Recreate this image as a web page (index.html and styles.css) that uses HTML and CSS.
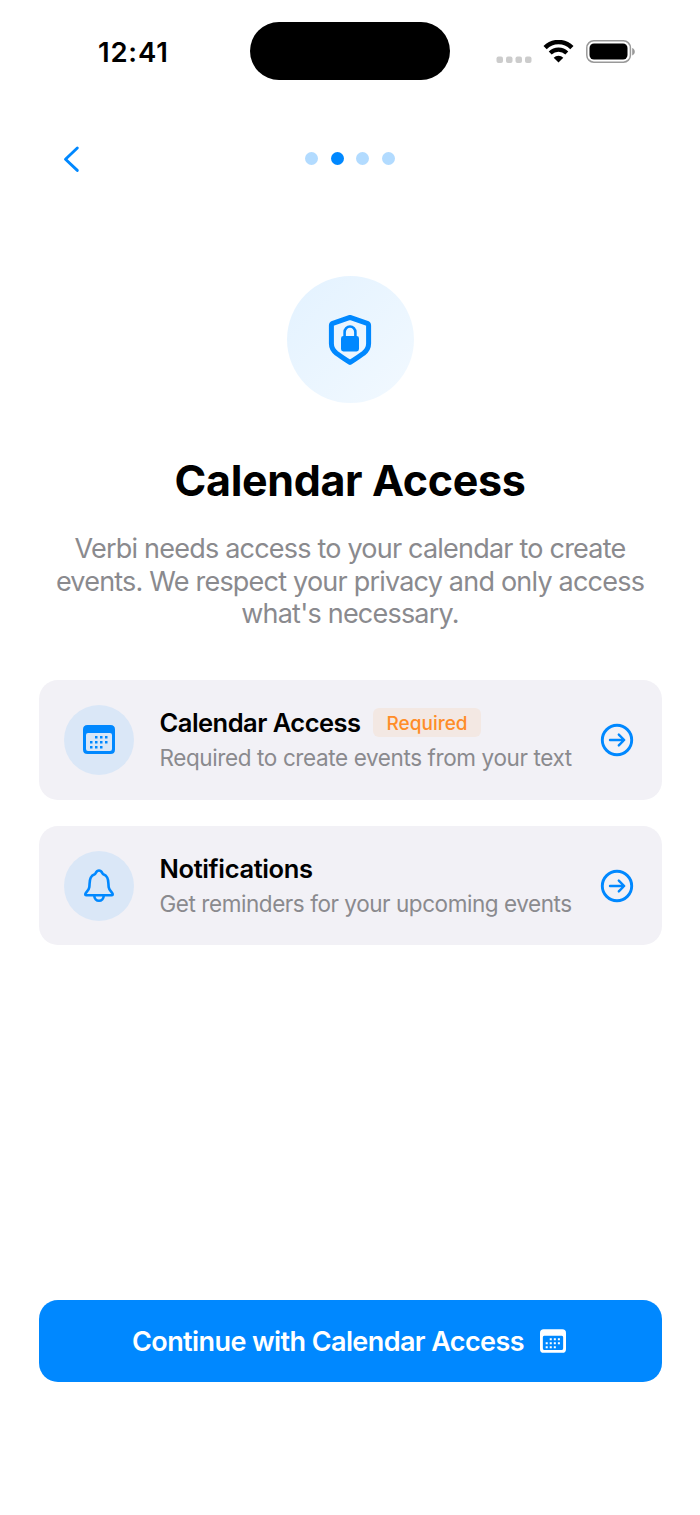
FILE: index.html
```html
<!DOCTYPE html>
<html lang="en">
<head>
    <meta charset="UTF-8">
    <meta name="viewport" content="width=device-width, initial-scale=1.0">
    <title>Calendar Access</title>
    <link rel="stylesheet" href="styles.css">
</head>
<body>
    <div class="status-bar">
        <div class="time">12:41</div>
        <div class="island"></div>
        <div class="status-icons">
            <svg class="cellular" width="36" height="7" viewBox="0 0 36 7" fill="#cccccc">
                <rect x="0.5" y="0.5" width="6.5" height="6.5" rx="2"/>
                <rect x="10" y="0.5" width="6.5" height="6.5" rx="2"/>
                <rect x="19.5" y="0.5" width="6.5" height="6.5" rx="2"/>
                <rect x="29" y="0.5" width="6.5" height="6.5" rx="2"/>
            </svg>
            <svg class="wifi" width="31" height="23" viewBox="0 0 31 23">
                <path d="M2.1 7.6a19 19 0 0 1 26.8 0" fill="none" stroke="#000" stroke-width="4.6"/>
                <path d="M7.2 12.9a12 12 0 0 1 16.6 0" fill="none" stroke="#000" stroke-width="4.2"/>
                <path d="M15.5 22.4 10.7 17.8a6.9 6.9 0 0 1 9.6 0z"/>
            </svg>
            <svg class="battery" width="50" height="23" viewBox="0 0 50 23">
                <rect x="0.8" y="0.8" width="43.6" height="21.4" rx="7" fill="none" stroke="#999" stroke-width="1.5"/>
                <rect x="3.5" y="3.5" width="38" height="16" rx="4.5"/>
                <path d="M46.2 8v7.4c1.6-.6 2.6-2 2.6-3.7s-1-3.1-2.6-3.7z" fill="#999"/>
            </svg>
        </div>
    </div>

    <div class="nav">
        <a class="back">
            <svg width="18" height="28" viewBox="0 0 18 28">
                <path d="M15.3 3 3.5 14.2 15.3 25.4" fill="none" stroke="#0088ff" stroke-width="2.9" stroke-linecap="round" stroke-linejoin="round"/>
            </svg>
        </a>
        <div class="dots">
            <span class="dot"></span>
            <span class="dot active"></span>
            <span class="dot"></span>
            <span class="dot"></span>
        </div>
    </div>

    <div class="intro">
        <div class="hero">
            <svg width="44" height="52" viewBox="0 0 44 52">
                <path d="M22 3.4 39.2 9.4Q40.6 10 40.6 11.6V29.5Q40.6 35.2 35.6 39.2Q31 42.6 22 48.4Q13 42.6 8.4 39.2Q3.4 35.2 3.4 29.5V11.6Q3.4 10 4.8 9.4Z" fill="none" stroke="#0088ff" stroke-width="5" stroke-linejoin="round"/>
                <rect x="13" y="22" width="18" height="15.4" rx="2.4" fill="#0088ff"/>
                <path d="M16.6 23.5V18.2a5.4 5.7 0 0 1 10.8 0v5.3" fill="none" stroke="#0088ff" stroke-width="2.6"/>
            </svg>
        </div>
        <h1>Calendar Access</h1>
        <p class="lead">Verbi needs access to your calendar to create<br>events. We respect your privacy and only access<br>what's necessary.</p>
    </div>

    <div class="cards">
        <div class="card">
            <div class="card-icon">
                <svg width="32" height="29" viewBox="0 0 32 29" fill="#0088ff">
                    <path fill-rule="evenodd" d="M4.5 0h23Q32 0 32 4.5v20Q32 29 27.5 29h-23Q0 29 0 24.5v-20Q0 0 4.5 0zM5 8Q3 8 3 10v14Q3 26 5 26h22Q29 26 29 24V10Q29 8 27 8z"/>
                    <path d="M12 11h2.5v2.5H12zM17 11h2.5v2.5H17zM22 11h2.5v2.5H22zM7 16h2.5v2.5H7zM12 16h2.5v2.5H12zM17 16h2.5v2.5H17zM22 16h2.5v2.5H22zM7 21h2.5v2.5H7zM12 21h2.5v2.5H12zM17 21h2.5v2.5H17z"/>
                </svg>
            </div>
            <div class="card-text">
                <div class="card-title">Calendar Access <span class="badge">Required</span></div>
                <div class="card-sub">Required to create events from your text</div>
            </div>
            <svg class="arrow" width="34" height="34" viewBox="0 0 34 34" fill="none" stroke="#0088ff" stroke-width="2.9">
                <circle cx="17" cy="17" r="14.7"/>
                <path d="M10 17h14M18.8 11.6l5.4 5.4-5.4 5.4" stroke-width="2.4" stroke-linecap="round" stroke-linejoin="round"/>
            </svg>
        </div>
        <div class="card">
            <div class="card-icon bell">
                <svg width="32" height="34" viewBox="0 0 32 34" fill="none" stroke="#0088ff" stroke-width="2.6" stroke-linejoin="round">
                    <path d="M3.4 27.2H28.6Q30.2 27.2 29.5 25.5C28.6 23.7 26.2 22.2 25.7 19.2C25.2 16 25.8 12.5 24.2 9.5Q23 7.2 20.3 6.3C19.3 6 19 2.5 16 2.5S12.7 6 11.7 6.3Q9 7.2 7.8 9.5C6.2 12.5 6.8 16 6.3 19.2C5.8 22.2 3.4 23.7 2.5 25.5Q1.8 27.2 3.4 27.2Z"/>
                    <path d="M11.3 27.7a4.7 5 0 0 0 9.4 0"/>
                </svg>
            </div>
            <div class="card-text">
                <div class="card-title wide">Notifications</div>
                <div class="card-sub tight">Get reminders for your upcoming events</div>
            </div>
            <svg class="arrow" width="34" height="34" viewBox="0 0 34 34" fill="none" stroke="#0088ff" stroke-width="2.9">
                <circle cx="17" cy="17" r="14.7"/>
                <path d="M10 17h14M18.8 11.6l5.4 5.4-5.4 5.4" stroke-width="2.4" stroke-linecap="round" stroke-linejoin="round"/>
            </svg>
        </div>
    </div>

    <a class="continue">
        <span class="continue-label">Continue with Calendar Access</span>
        <svg width="26" height="24" viewBox="0 0 32 29" fill="#fff">
            <path fill-rule="evenodd" d="M4.5 0h23Q32 0 32 4.5v20Q32 29 27.5 29h-23Q0 29 0 24.5v-20Q0 0 4.5 0zM5 8Q3.5 8 3.5 10v13.5Q3.5 25.5 5 25.5h22Q28.5 25.5 28.5 23.5V10Q28.5 8 27 8z"/>
            <path d="M12 11h2.5v2.5H12zM17 11h2.5v2.5H17zM22 11h2.5v2.5H22zM7 16h2.5v2.5H7zM12 16h2.5v2.5H12zM17 16h2.5v2.5H17zM22 16h2.5v2.5H22zM7 21h2.5v2.5H7zM12 21h2.5v2.5H12zM17 21h2.5v2.5H17z"/>
        </svg>
    </a>
</body>
</html>
```
FILE: styles.css
```css
* {
    box-sizing: border-box;
}
body {
    margin: 0;
    height: 1515px;
    background: #fff;
    color: #000;
    font-family: Inter, "Liberation Sans", sans-serif;
    display: flex;
    flex-direction: column;
    white-space: nowrap;
}
svg {
    display: block;
    flex: none;
}
.status-bar {
    height: 102px;
    display: grid;
    grid-template-columns: 250px 200px 250px;
    align-items: center;
}
.time {
    padding: 2px 0 0 98px;
    font-size: 27.5px;
    font-weight: 600;
    line-height: 34px;
    letter-spacing: 0.8px;
}
.island {
    height: 58px;
    border-radius: 29px;
    background: #000;
}
.status-icons {
    display: flex;
    align-items: center;
    padding-left: 46px;
}
.cellular {
    margin-top: 16px;
}
.wifi {
    margin-left: 11px;
}
.battery {
    margin-left: 12px;
}
.nav {
    height: 114px;
    display: grid;
    grid-template-columns: 250px 200px 250px;
    align-items: center;
}
.back {
    padding-left: 62px;
}
.dots {
    display: flex;
    justify-content: center;
    gap: 12.5px;
    padding-bottom: 1px;
}
.dot {
    width: 13px;
    height: 13px;
    border-radius: 50%;
    background: #b2dbff;
}
.dot.active {
    background: #0088ff;
}
.intro {
    display: flex;
    flex-direction: column;
    align-items: center;
    height: 464px;
    padding-top: 60px;
}
.hero {
    width: 127px;
    height: 127px;
    border-radius: 50%;
    background: linear-gradient(135deg, #e3f2ff, #f2f9ff);
    display: flex;
    align-items: center;
    justify-content: center;
}
h1 {
    margin: 50px 0 0;
    font-size: 43px;
    font-weight: 700;
    line-height: 54px;
    letter-spacing: -0.35px;
}
.lead {
    margin: 26px 0 0;
    color: #8a8a8e;
    font-size: 27px;
    line-height: 32.5px;
    letter-spacing: -0.79px;
    text-align: center;
}
.cards {
    display: flex;
    flex-direction: column;
    gap: 26px;
    padding: 0 38.5px;
}
.card {
    height: 119.7px;
    border-radius: 19px;
    background: #f2f1f6;
    display: flex;
    align-items: center;
    padding: 0 27.5px 0 25.5px;
}
.card-icon {
    width: 70px;
    height: 70px;
    border-radius: 50%;
    background: #dae7f7;
    display: flex;
    align-items: center;
    justify-content: center;
}
.bell {
    padding-bottom: 2px;
}
.card-text {
    margin-left: 25.5px;
    flex: 1;
}
.card-title {
    display: flex;
    align-items: center;
    height: 30px;
    font-size: 25.5px;
    font-weight: 600;
    letter-spacing: -0.52px;
}
.wide {
    letter-spacing: -0.36px;
}
.badge {
    margin-left: 12.5px;
    width: 108px;
    height: 29px;
    border-radius: 6px;
    background: #f3e8e3;
    color: #ff8d28;
    font-size: 19px;
    font-weight: 500;
    line-height: 31px;
    letter-spacing: 0;
    text-align: center;
}
.card-sub {
    margin-top: 6px;
    color: #8a8a8e;
    font-size: 22.5px;
    line-height: 28px;
    letter-spacing: -0.39px;
}
.tight {
    letter-spacing: -0.44px;
}
.continue {
    margin: 354.6px 38.5px 0;
    padding-right: 2px;
    height: 82px;
    border-radius: 19px;
    background: #0088ff;
    color: #fff;
    display: flex;
    align-items: center;
    justify-content: center;
    gap: 16px;
    font-size: 27px;
    font-weight: 600;
    letter-spacing: -0.59px;
}
.continue-label {
    padding-top: 1px;
}
```
